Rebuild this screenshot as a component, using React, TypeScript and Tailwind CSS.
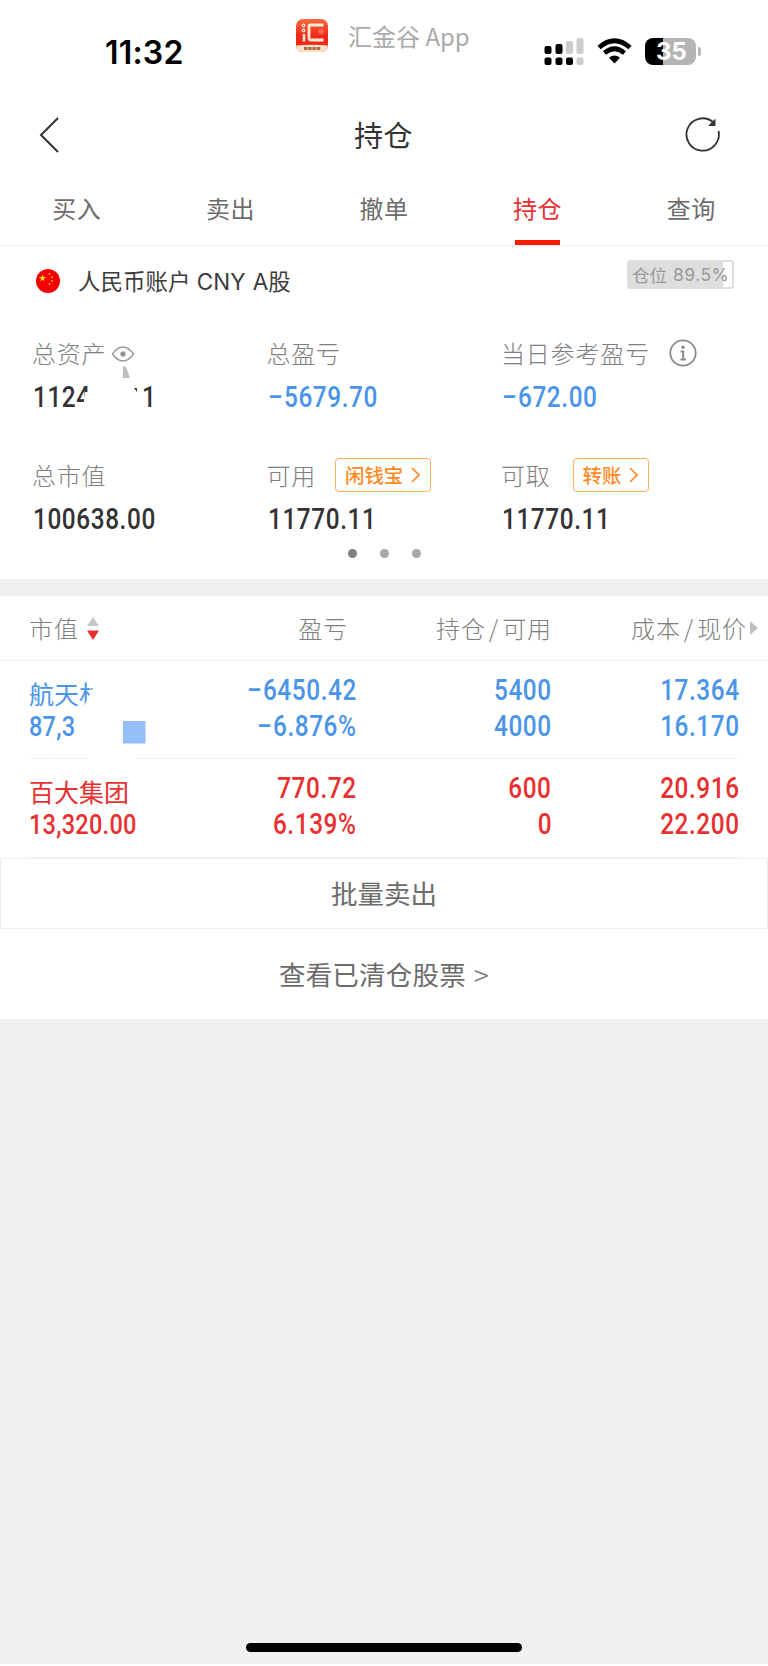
import React from 'react';

type Tone = 'up' | 'down' | 'plain';

const toneClass: Record<Tone, string> = { up: 'text-[#e93030]', down: 'text-[#4a94ea]', plain: 'text-[#333333]' };

const tabs = ['买入', '卖出', '撤单', '持仓', '查询'];

const Num: React.FC<{ children: string; right?: boolean; small?: boolean }> = ({ children, right, small }) => (
    <span className={`inline-block scale-x-[0.84] whitespace-nowrap font-['Roboto',sans-serif] font-medium leading-9 ${small ? 'text-[28px] tracking-[0.3px]' : 'text-[29px] tracking-[0.7px]'} ${right ? '-mr-[1px] origin-right' : 'origin-left'}`}>
        {children.startsWith('−') ? <><span className="mr-[1px] inline-block origin-left scale-x-[1.1] pr-[1px]">−</span>{children.slice(1)}</> : children}
    </span>
);

const AppLogo: React.FC = () => (
    <svg width="32" height="33" viewBox="0 0 32 33">
        <defs>
            <linearGradient id="logo" x1="0" y1="0" x2="0" y2="1">
                <stop offset="0" stopColor="#fb6a3c" />
                <stop offset="0.5" stopColor="#ee2a1c" />
            </linearGradient>
            <clipPath id="logoClip"><rect width="32" height="33" rx="7" /></clipPath>
        </defs>
        <g clipPath="url(#logoClip)">
            <rect width="32" height="33" fill="url(#logo)" />
            <path d="M0 26.500Q16 25 32 26.500V33H0z" fill="#fbe3c4" />
        </g>
        <g fill="none" stroke="#fdebd3">
            <circle cx="7.500" cy="6.500" r="1.300" strokeWidth="1.200" />
            <circle cx="7.500" cy="11.500" r="1.300" strokeWidth="1.200" />
            <path d="M8 15V22.500" strokeWidth="2.600" />
            <path d="M27.500 6H14.500Q13 6 13 7.500V19Q13 21 15 21H27.500" strokeWidth="2.800" />
        </g>
        <circle cx="25" cy="12.500" r="2.800" fill="#f8694c" />
        <path d="M8 29.500H25" stroke="#a8684a" strokeWidth="3" strokeDasharray="3.400 0.800" />
    </svg>
);

const StatusBar: React.FC = () => (
    <div className="relative h-[88px]">
        <div className="flex justify-between pl-[105px] pr-[67px] pt-[36px]">
            <span className="pt-[1px] font-['Inter',sans-serif] text-[32px] font-semibold leading-8 tracking-[0.2px] text-black">11:32</span>
            <div className="flex gap-[13px] pt-[2px]">
                <svg width="40" height="28" viewBox="0 0 40 28">
                    <g fill="#000">
                        <rect x="0.500" y="8" width="7" height="8" rx="2" />
                        <rect x="11.500" y="6" width="7" height="10" rx="2" />
                        <rect x="0.500" y="19.500" width="7" height="7.500" rx="2" />
                        <rect x="11.500" y="19.500" width="7" height="7.500" rx="2" />
                        <rect x="22" y="19.500" width="7" height="7.500" rx="2" />
                    </g>
                    <g fill="#cccccc">
                        <rect x="22" y="3" width="7" height="13" rx="2" />
                        <rect x="32.500" y="0" width="7" height="16" rx="2" />
                        <rect x="32.500" y="19.500" width="7" height="7.500" rx="2" />
                    </g>
                </svg>
                <svg width="35" height="27" viewBox="0 0 35 27">
                    <path d="M2 9.500Q17.500 -4 33 9.500" fill="none" stroke="#000" strokeWidth="4.800" />
                    <path d="M7.500 15Q17.500 6.500 27.500 15" fill="none" stroke="#000" strokeWidth="4.600" />
                    <path d="M12 19.800Q17.500 15.400 23 19.800L17.500 25.500z" fill="#000" />
                </svg>
                <div className="flex items-start">
                    <div className="flex h-[27px] w-[51px] items-center justify-center rounded-[8px] bg-[linear-gradient(90deg,#000_35%,#b5b5b5_35%)] pl-0.5 pt-[1px] font-['Inter',sans-serif] text-[24px] font-bold leading-none text-white">35</div>
                    <div className="mt-[9px] ml-[2px] h-[9px] w-[3px] rounded-r-full bg-[#b5b5b5]" />
                </div>
            </div>
        </div>
        <div className="absolute left-[296px] top-[19px] flex gap-[20px]">
            <AppLogo />
            <span className="-mt-[1px] text-[24px] leading-[35px] whitespace-nowrap text-[#aaaaaa]">汇金谷 App</span>
        </div>
    </div>
);

const SmallButton: React.FC<{ label: string }> = ({ label }) => (
    <span className="flex h-[34px] items-center gap-[8px] rounded-[4px] border border-[#ffab5e] pl-[9px] pr-[10px] text-[19.500px] font-medium leading-none tracking-[-0.2px] text-[#ff8a24]">
        {label}
        <svg width="9" height="16" viewBox="0 0 9 16"><path d="M1 1L8 8L1 15" fill="none" stroke="#ff8a24" strokeWidth="1.700" /></svg>
    </span>
);

const Metric: React.FC<{ label: string; tone?: Tone; extra?: React.ReactNode; children: React.ReactNode }> = ({ label, tone = 'plain', extra, children }) => (
    <div className="w-[234.500px]">
        <div className="flex h-9 items-center whitespace-nowrap text-[24px] font-light tracking-[0.8px] text-[#808080]">{label}{extra}</div>
        <div className={`mt-[8px] h-9 pl-[1px] ${toneClass[tone]}`}>{children}</div>
    </div>
);

const Cell: React.FC<{ top: string; bottom: string }> = ({ top, bottom }) => (
    <div className="flex flex-col items-end">
        <Num right>{top}</Num>
        <Num right>{bottom}</Num>
    </div>
);

const Summary: React.FC = () => (
    <div className="h-[333px]">
        <div className="flex h-[72px] justify-between pl-[36px] pr-[34px]">
            <div className="flex h-[69px] items-center">
                <svg width="24" height="24" viewBox="0 0 24 24">
                    <circle cx="12" cy="12" r="12" fill="#f50000" />
                    <path d="M6.500 5.500L7.400 8.100H10.100L7.900 9.700L8.700 12.300L6.500 10.700L4.300 12.300L5.100 9.700L2.900 8.100H5.600z" fill="#ffe100" />
                    <g fill="#ffd000"><circle cx="13.500" cy="5" r="0.900" /><circle cx="16" cy="8" r="0.900" /><circle cx="16" cy="12" r="0.900" /><circle cx="13.500" cy="15" r="0.900" /></g>
                </svg>
                <span className="ml-[18px] mt-[2px] font-['Inter','Noto_Sans_CJK_SC',sans-serif] text-[22.500px] whitespace-nowrap text-[#3c3c3c]">人民币账户 CNY <span className="ml-[1px]">A股</span></span>
            </div>
            <div className="mt-[14px] flex h-[29px] w-[107px] items-center rounded-[3px] border-2 border-[#dedede] bg-[linear-gradient(90deg,#dedede_91%,#fff_91%)] pl-[3px] text-[17.500px] leading-none whitespace-nowrap text-[#999999]">
                仓位&nbsp;<span className="ml-[2px] font-['Inter',sans-serif] tracking-[0.5px]">89.5%</span>
            </div>
        </div>
        <div className="relative flex pl-[32px] pt-[17px]">
            <Metric
                label="总资产"
                extra={
                    <svg className="ml-[5px] mt-[2px]" width="24" height="16" viewBox="0 0 24 16" fill="none" stroke="#999999" strokeWidth="1.400">
                        <path d="M1.500 8Q6.500 1 12 1T22.500 8Q17.500 15 12 15T1.500 8z" />
                        <circle cx="12" cy="8" r="2" fill="#8c8c8c" />
                    </svg>
                }
            >
                <div className="flex">
                    <div className="w-[109px]"><Num>1124</Num></div>
                    <Num>1</Num>
                </div>
            </Metric>
            <Metric label="总盈亏" tone="down"><Num>−5679.70</Num></Metric>
            <Metric
                label="当日参考盈亏"
                tone="down"
                extra={
                    <svg className="ml-[19px]" width="28" height="28" viewBox="0 0 28 28" fill="none" stroke="#8c8c8c">
                        <circle cx="14" cy="14" r="12.700" strokeWidth="1.800" />
                        <circle cx="14" cy="8.300" r="1.700" fill="#8c8c8c" stroke="none" />
                        <path d="M11.500 12.500H14.200V20.500M11.500 20.500H17" strokeWidth="2" />
                    </svg>
                }
            >
                <Num>−672.00</Num>
            </Metric>
            <svg className="absolute left-[83px] top-[48px]" width="56" height="68" viewBox="0 0 56 68">
                <path d="M2 26H55V68H0V42z" fill="#fff" />
                <path d="M40 0L43 1L47 12H40z" fill="#bdbdbd" />
                <path d="M51 22H54V26z" fill="#333333" />
            </svg>
        </div>
        <div className="flex pl-[32px] pt-[42px]">
            <Metric label="总市值"><Num>100638.00</Num></Metric>
            <Metric label="可用" extra={<span className="ml-[19px]"><SmallButton label="闲钱宝" /></span>}><Num>11770.11</Num></Metric>
            <Metric label="可取" extra={<span className="ml-[22px]"><SmallButton label="转账" /></span>}><Num>11770.11</Num></Metric>
        </div>
        <div className="mt-[12px] flex justify-center gap-[23px]">
            <i className="size-[9px] rounded-full bg-[#808080]" />
            <i className="size-[9px] rounded-full bg-[#a8a8a8]" />
            <i className="size-[9px] rounded-full bg-[#a8a8a8]" />
        </div>
    </div>
);

const Slash: React.FC = () => <span className="mx-[3px]">/</span>;

const Holdings: React.FC = () => (
    <div>
        <div className="grid h-[65px] grid-cols-[193px_126px_204px_1fr] items-center border-b border-[#f4f4f4] pl-[29px] text-right text-[24px] font-light tracking-[0.9px] whitespace-nowrap text-[#808080]">
            <div className="flex items-center">
                市值
                <svg className="ml-[8px] mt-[1px]" width="12" height="23" viewBox="0 0 12 23"><path d="M6 0L12 9H0z" fill="#c8c8c8" /><path d="M0 13.500H12L6 23z" fill="#e93030" /></svg>
            </div>
            <div>盈亏</div>
            <div>持仓<Slash />可用</div>
            <div className="flex items-center justify-end pr-[10px]">
                成本<Slash />现价
                <svg className="ml-[3px]" width="8" height="14" viewBox="0 0 8 14"><path d="M0 0L8 7L0 14z" fill="#c0c0c0" /></svg>
            </div>
        </div>
        <div className="px-[29px]">
            <div className={`grid h-[98px] grid-cols-[165px_162px_195px_1fr] border-b border-[#f1f1f1] pt-[11px] ${toneClass.down}`}>
                <div className="relative">
                    <div className="text-[25px] leading-[42px] whitespace-nowrap">航天材</div>
                    <div className="-mt-[5px]"><Num small>87,3</Num></div>
                    <svg className="absolute left-0 top-0" width="140" height="90" viewBox="0 0 140 90">
                        <path d="M90 6H69L56 32V40H90z" fill="#fff" />
                        <rect x="94" y="49" width="22.500" height="22.500" fill="#94bff8" />
                        <rect x="59" y="85" width="48" height="5" fill="#fff" />
                    </svg>
                </div>
                <Cell top="−6450.42" bottom="−6.876%" />
                <Cell top="5400" bottom="4000" />
                <Cell top="17.364" bottom="16.170" />
            </div>
            <div className={`grid h-[99px] grid-cols-[165px_162px_195px_1fr] border-b border-[#f1f1f1] pt-[11px] ${toneClass.up}`}>
                <div>
                    <div className="text-[25px] leading-[42px]">百大集团</div>
                    <div className="-mt-[5px]"><Num small>13,320.00</Num></div>
                </div>
                <Cell top="770.72" bottom="6.139%" />
                <Cell top="600" bottom="0" />
                <Cell top="20.916" bottom="22.200" />
            </div>
        </div>
    </div>
);

const App: React.FC = () => (
    <div className="flex h-[1666px] w-[768px] flex-col overflow-hidden border-b-2 border-white bg-[#f0f0f3] font-['Noto_Sans_CJK_SC',sans-serif]">
        <div className="bg-white">
            <StatusBar />
            <div className="grid h-[94px] grid-cols-[1fr_auto_1fr] items-center pl-[38px] pr-[47px]">
                <svg width="21" height="36" viewBox="0 0 21 36"><path d="M20 1L3 18L20 35" fill="none" stroke="#333" strokeWidth="2" /></svg>
                <span className="ml-[8px] text-[29px] tracking-[0.5px] text-[#333333]">持仓</span>
                <svg className="justify-self-end" width="36" height="36" viewBox="0 0 36 36">
                    <path d="M33.500 14A16.200 16.200 0 1 1 28 5" fill="none" stroke="#333" strokeWidth="1.800" />
                    <path d="M30 2.500V8.500H24z" fill="#333" stroke="#333" strokeLinejoin="round" />
                </svg>
            </div>
            <div className="grid h-[64px] grid-cols-5 border-b border-[#eeeeee]">
                {tabs.map(tab => (
                    <div key={tab} className={`flex flex-col items-center justify-between pt-[8px] text-[24px] leading-9 tracking-[0.5px] ${tab === '持仓' ? 'text-[#e93030]' : 'text-[#6c6c6c]'}`}>
                        {tab}
                        {tab === '持仓' && <div className="h-[5px] w-[45px] bg-[#fb1a04]" />}
                    </div>
                ))}
            </div>
            <Summary />
        </div>
        <div className="mt-[17px] h-[423px] bg-white">
            <Holdings />
            <div className="flex h-[71px] items-center justify-center border border-[#eeeeee] pb-[2px] text-[26.500px] text-[#6c6c6c]">批量卖出</div>
            <div className="flex h-[90px] items-center justify-center gap-[8px] text-[26.500px] tracking-[0.2px] text-[#6c6c6c]">查看已清仓股票<span className="text-[28px] font-light">&gt;</span></div>
        </div>
        <div className="mx-auto mb-[12px] mt-auto h-[9px] w-[276px] rounded-full bg-black" />
    </div>
);

export default App;
